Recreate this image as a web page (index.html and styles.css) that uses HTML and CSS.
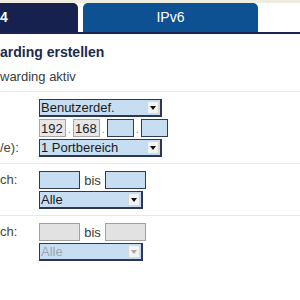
FILE: index.html
```html
<!DOCTYPE html>
<html lang="de">
<head>
    <meta charset="UTF-8">
    <title>Portforwarding</title>
    <link rel="stylesheet" href="styles.css">
</head>
<body>
<div class="tabs">
    <div class="tab tab-active">4</div>
    <div class="tab tab-other">IPv6</div>
</div>

<div class="content">
    <h1>arding erstellen</h1>
    <p class="note">warding aktiv</p>

    <!-- Protokoll / IP / Ports -->
    <div class="group">
        <span class="lbl"></span>
        <div class="select sel-wide"><span class="sel-text">Benutzerdef.</span><span class="arrow"><i></i></span></div>

        <span class="lbl"></span>
        <div class="ip">
            <input type="text" class="box box-ip box-grey" value="192"><span class="dot">.</span>
            <input type="text" class="box box-ip box-grey" value="168"><span class="dot">.</span>
            <input type="text" class="box box-ip"><span class="dot">.</span>
            <input type="text" class="box box-ip">
        </div>

        <span class="lbl">/e):</span>
        <div class="select sel-wide"><span class="sel-text">1 Portbereich</span><span class="arrow"><i></i></span></div>
    </div>

    <!-- Portbereich 1 -->
    <div class="group">
        <span class="lbl">ch:</span>
        <div class="range">
            <input type="text" class="box box-port"><span class="bis">bis</span><input type="text" class="box box-port">
        </div>

        <span class="lbl"></span>
        <div class="select sel-short"><span class="sel-text">Alle</span><span class="arrow"><i></i></span></div>
    </div>

    <!-- Portbereich 2 (deaktiviert) -->
    <div class="group">
        <span class="lbl">ch:</span>
        <div class="range">
            <input type="text" class="box box-port box-off" disabled><span class="bis">bis</span><input type="text" class="box box-port box-off" disabled>
        </div>

        <span class="lbl"></span>
        <div class="select sel-short sel-off"><span class="sel-text">Alle</span><span class="arrow"><i></i></span></div>
    </div>
</div>
</body>
</html>
```

FILE: styles.css
```css
* {
    margin: 0;
    padding: 0;
    box-sizing: border-box;
}

body {
    background: #ffffff;
    font-family: "Liberation Sans", Arial, sans-serif;
    color: #3a3a3a;
    width: 300px;
    overflow: hidden;
}

/* Reiter */
.tabs {
    display: flex;
    gap: 5px;
    height: 34px;
    padding-top: 3px;
    background: linear-gradient(#efeddf 0, #efeddf 3px, #ffffff 3px);
    border-bottom: 2px solid #1b2452;
}

.tab {
    height: 29px;
    line-height: 29px;
    color: #ffffff;
    font-size: 14px;
}

.tab-active {
    width: 78px;
    background: #16214f;
    border-top-right-radius: 5px;
    font-weight: bold;
}

.tab-other {
    width: 175px;
    background: #0d5192;
    border-radius: 5px 5px 0 0;
    text-align: center;
}

/* Inhalt */
.content {
    padding-top: 10px;
}

h1 {
    font-size: 14px;
    line-height: 17px;
    color: #1c2a4c;
}

.note {
    font-size: 13px;
    line-height: 16px;
    margin-top: 8px;
    color: #3c3c3c;
}

.group {
    display: grid;
    grid-template-columns: 39px auto;
    row-gap: 2px;
    padding: 7px 0 6px;
    border-top: 1px solid #e8e8e8;
    margin-top: 6px;
}

.group + .group {
    margin-top: 0;
    padding-top: 7px;
}

.lbl {
    font-size: 13px;
    line-height: 18px;
    color: #444444;
    white-space: nowrap;
}

/* Auswahlfelder */
.select {
    display: flex;
    align-items: center;
    height: 18px;
    background: #c7def2;
    border: 1px solid #2c3656;
    border-right-width: 2px;
    border-bottom-width: 2px;
    font-size: 13px;
    color: #1a1a1a;
    padding-left: 1px;
}

.sel-wide {
    width: 123px;
}

.sel-short {
    width: 104px;
}

.sel-text {
    flex: 1;
    line-height: 15px;
}

.arrow {
    width: 12px;
    height: 13px;
    margin-right: 1px;
    background: #f3f3f3;
    border: 1px solid #d8d8d8;
    display: flex;
    align-items: center;
    justify-content: center;
}

.arrow i {
    width: 0;
    height: 0;
    border-left: 3px solid transparent;
    border-right: 3px solid transparent;
    border-top: 4px solid #111111;
}

.sel-off {
    color: #9aa6b2;
}

.sel-off .arrow i {
    border-top-color: #a8a8a8;
}

/* Eingabefelder */
.box {
    height: 18px;
    background: #c7def2;
    border: 1px solid #2f3a5c;
    font-family: "Liberation Sans", Arial, sans-serif;
    font-size: 13px;
    color: #222222;
    padding: 0 1px;
    outline: none;
}

.ip,
.range {
    display: flex;
    align-items: center;
    height: 18px;
}

.box-ip {
    width: 27px;
}

.box-grey {
    background: #e7e7e7;
    border-color: #a6a6a6;
}

.dot {
    width: 7px;
    text-align: center;
    font-size: 10px;
    line-height: 18px;
    padding-top: 4px;
    color: #888888;
}

.box-port {
    width: 41px;
}

.bis {
    width: 25px;
    text-align: center;
    font-size: 13px;
    color: #3a3a3a;
}

.box-off {
    background: #e2e2e2;
    border-color: #a0a0a0;
}
```
